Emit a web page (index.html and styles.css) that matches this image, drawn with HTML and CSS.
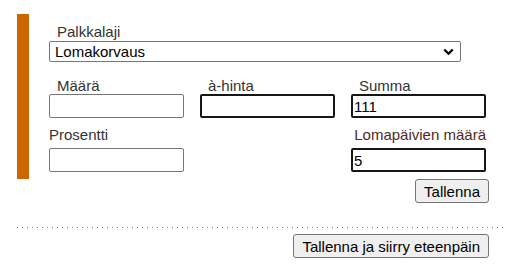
FILE: index.html
```html
<!DOCTYPE html>
<html lang="fi">
<head>
<meta charset="utf-8">
<title>Palkkalaji</title>
<link rel="stylesheet" href="styles.css">
</head>
<body>
<div class="page">
  <div class="panel">
    <label class="lbl indent">Palkkalaji</label>
    <div class="select">
      <span>Lomakorvaus</span>
      <svg class="chev" width="11" height="8" viewBox="0 0 11 8"><polyline points="1.3,1.5 5.5,5.7 9.7,1.5" fill="none" stroke="#000" stroke-width="2.3"/></svg>
    </div>
    <div class="grid">
      <div class="cell">
        <label class="lbl indent">Määrä</label>
        <input class="inp" type="text" value="">
      </div>
      <div class="cell">
        <label class="lbl indent">à-hinta</label>
        <input class="inp dark" type="text" value="">
      </div>
      <div class="cell">
        <label class="lbl indent">Summa</label>
        <input class="inp dark" type="text" value="111">
      </div>
      <div class="cell row2">
        <label class="lbl">Prosentti</label>
        <input class="inp" type="text" value="">
      </div>
      <div class="cell row2"></div>
      <div class="cell row2">
        <label class="lbl right alt">Lomapäivien määrä</label>
        <input class="inp dark" type="text" value="5">
      </div>
    </div>
  </div>
  <div class="actions">
    <button class="btn">Tallenna</button>
  </div>
  <div class="sep"></div>
  <div class="actions bottom">
    <button class="btn">Tallenna ja siirry eteenpäin</button>
  </div>
</div>
</body>
</html>
```

FILE: styles.css
```css
html, body {
  margin: 0;
  padding: 0;
  background: #fff;
}
body {
  font-family: "Liberation Sans", Arial, sans-serif;
  font-size: 15px;
  color: #000;
}
.page {
  padding: 14px 0 0 17px;
}
.panel {
  border-left: 12px solid #cc6600;
  padding: 9px 0 7px 20px;
}
.lbl {
  display: block;
  line-height: 17px;
  color: #333;
}
.lbl.indent {
  padding-left: 8px;
}
.lbl.right {
  text-align: right;
}
.lbl.alt {
  color: #4d2b26;
}
.panel > .lbl {
  margin-bottom: 1px;
}
.select {
  box-sizing: border-box;
  width: 412px;
  height: 21px;
  border: 1px solid #767676;
  border-radius: 2px;
  padding: 0 6px 0 5px;
  display: flex;
  align-items: center;
  justify-content: space-between;
  line-height: 17px;
}
.chev {
  display: block;
  margin-top: 1px;
}
.grid {
  margin-top: 15px;
  display: grid;
  grid-template-columns: 135px 135px 135px;
  column-gap: 16px;
  row-gap: 8px;
}
.cell {
  display: flex;
  flex-direction: column;
}
.cell.row2 .lbl {
  margin-bottom: 5px;
}
.inp {
  box-sizing: border-box;
  width: 135px;
  height: 24px;
  margin: 0;
  padding: 0 1px;
  border: 1px solid #767676;
  border-radius: 2px;
  font-family: "Liberation Sans", Arial, sans-serif;
  font-size: 15px;
  color: #000;
  background: #fff;
  outline: none;
}
.inp.dark {
  border: 2px solid #161616;
}
.actions {
  display: flex;
  justify-content: flex-end;
  padding-right: 18px;
}
.btn {
  box-sizing: border-box;
  height: 24px;
  margin: 0;
  padding: 0 8px;
  border: 1px solid #767676;
  border-radius: 3px;
  background: #efefef;
  color: #000;
  font-family: "Liberation Sans", Arial, sans-serif;
  font-size: 15px;
  line-height: 17px;
}
.sep {
  margin-top: 24px;
  height: 1px;
  background: repeating-linear-gradient(to right, #7a7a7a 0 1px, transparent 1px 5px);
}
.actions.bottom {
  margin-top: 6px;
}
```
